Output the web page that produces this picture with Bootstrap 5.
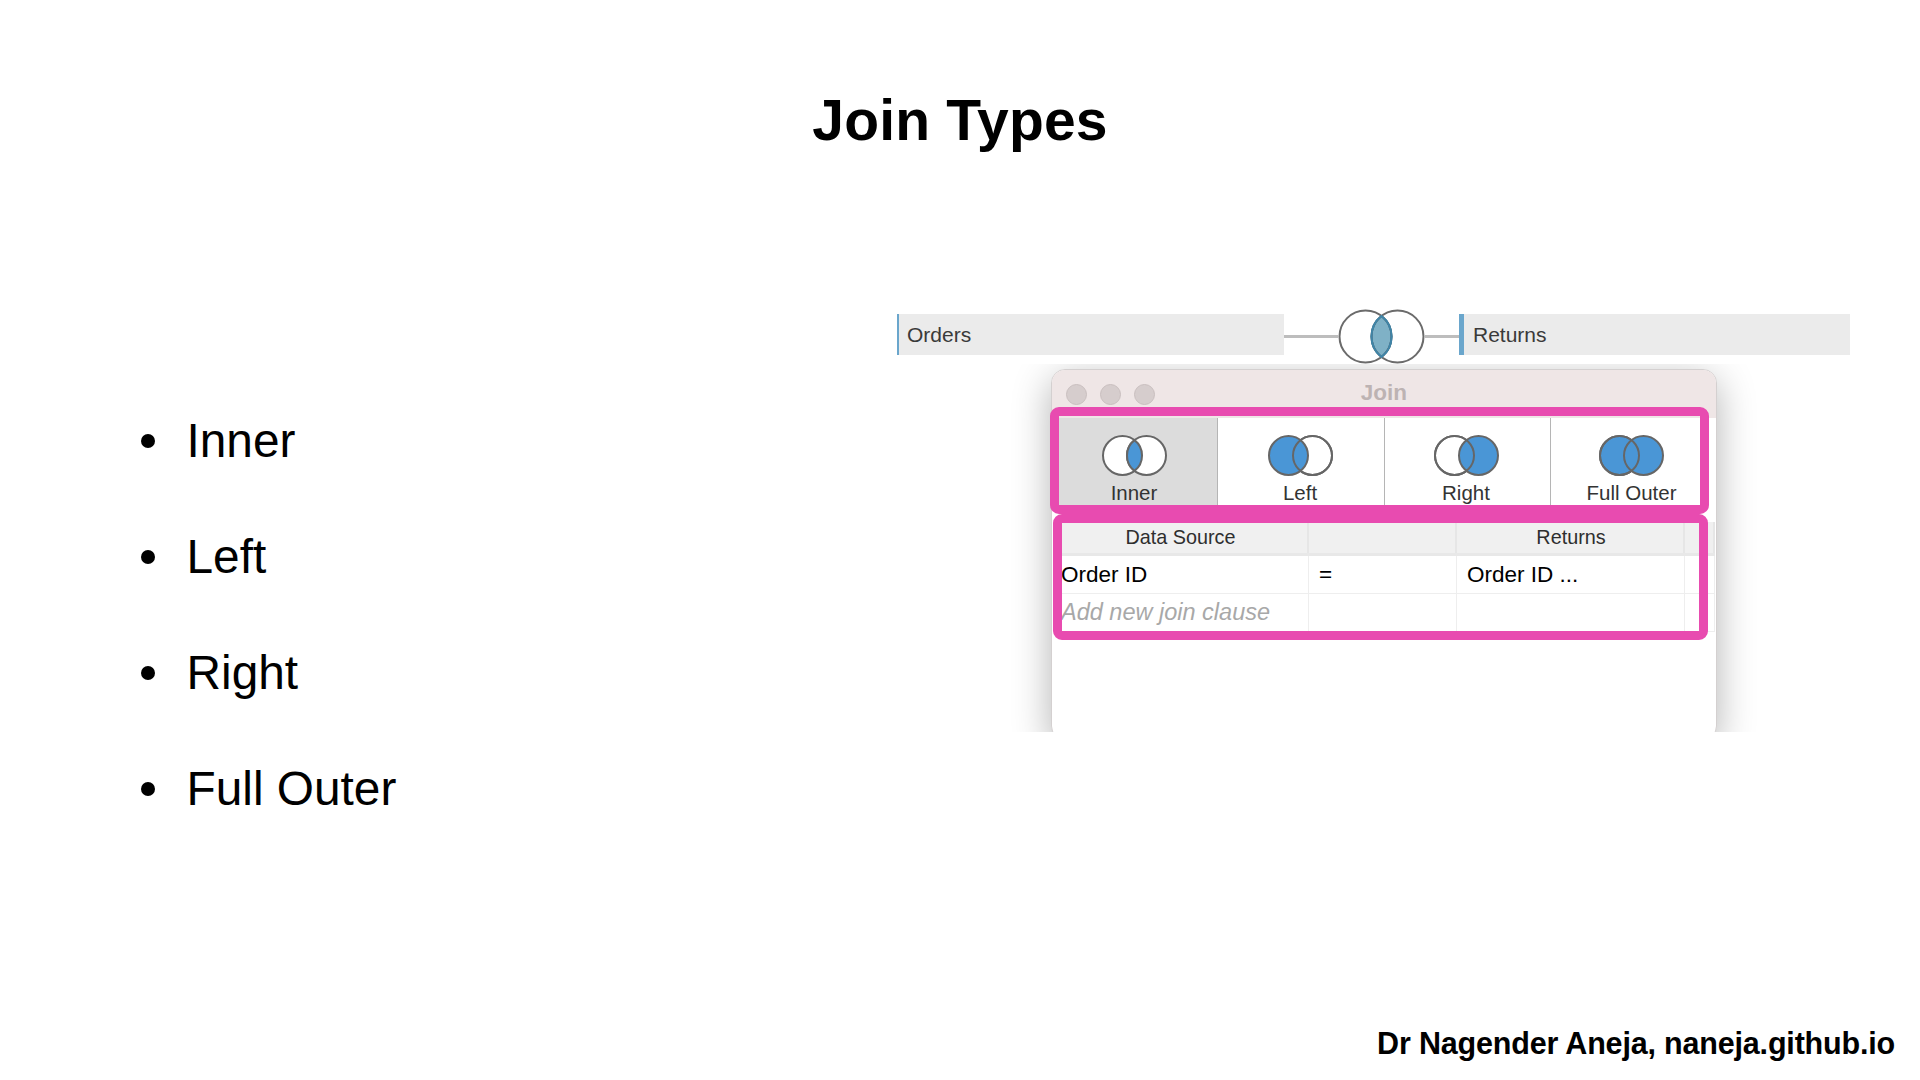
<!DOCTYPE html>
<html lang="en">
<head>
<meta charset="utf-8">
<title>Join Types</title>
<link rel="stylesheet" href="https://cdn.jsdelivr.net/npm/bootstrap@5.3.0/dist/css/bootstrap.min.css">
<style>
html,body{margin:0;background:#fff;}
body{font-family:"Liberation Sans",Arial,sans-serif;color:#000;}
.slide{width:1920px;height:1080px;overflow:hidden;}
.slide-head{height:309px;padding-top:82px;}
.slide-title{font-size:57px;font-weight:700;line-height:76px;margin:0;text-align:center;letter-spacing:.2px;}
.bullets{width:897px;padding:74px 0 0 141px;margin:0;list-style:none;}
.bullets li{height:116px;font-size:47.8px;gap:31.5px;}
.bullets li::before{content:"";width:14px;height:14px;border-radius:50%;background:#000;flex:none;}
.fig{width:960px;}
.src-bar{height:41px;margin-top:5px;background:#ebebeb;color:#3a3a3a;font-size:21px;line-height:41px;}
.src-left{width:387px;border-left:2px solid #6aa6cc;padding-left:8px;}
.src-right{width:391px;border-left:5px solid #6aa6cc;padding-left:9px;}
.connector{height:3px;margin-top:26px;background:#bdbdbd;}
.conn-a{width:54px;}
.conn-b{width:34px;}
.venn-top{flex:none;display:block;width:87px;height:55px;}
.clip-area{width:780px;height:368px;margin-left:100px;padding:5px 0 0 54px;overflow:hidden;}
.win{position:relative;width:666px;height:371px;border:1px solid #d4d0d0;border-radius:14px;background:#fff;box-shadow:0 10px 38px rgba(0,0,0,.3);}
.win-bar{height:48px;background:#efe6e6;border-radius:13px 13px 0 0;padding-left:14px;gap:13px;}
.dot{width:21px;height:21px;border-radius:50%;background:#d6cdcd;border:1px solid #c9bfbf;}
.win-title{position:absolute;left:0;right:0;top:5px;text-align:center;font-size:22.5px;font-weight:700;color:#bdb3b3;line-height:36px;}
.tabs{height:87px;padding-left:7px;}
.tab{color:#333;font-size:20.5px;line-height:24px;padding-top:17px;border-right:1px solid #b5b5b5;}
.tab svg{display:block;width:65px;height:41px;margin-bottom:5px;}
.tab-inner{width:159px;background:#dcdcdc;padding-right:8px;}
.tab-left{width:167px;padding-right:2px;}
.tab-right{width:166px;padding-right:3px;}
.tab-full{width:151px;border-right:0;padding-left:10px;}
.grid-wrap{margin:17px 0 0 7px;width:656px;}
.grid-row{display:grid;grid-template-columns:250px 148px 228px 30px;}
.grid-head{height:34px;background:#f0f0f0;border-bottom:3px solid #e8e8e8;color:#2e2e2e;font-size:19.8px;line-height:31px;text-align:center;}
.grid-head > div{border-right:2px solid #e6e6e6;}
.grid-head > div:first-child{padding-right:5px;}
.grid-head > div:nth-child(3){padding-left:2px;}
.grid-body{height:38px;border-bottom:1px solid #eee;font-size:22.5px;line-height:38px;}
.grid-body > div{border-right:1px solid #eee;padding-left:10px;white-space:nowrap;}
.grid-body > div:first-child{padding-left:2px;}
.grid-empty{color:#a8a8a8;font-style:italic;font-size:23.5px;line-height:36px;}
.pink{position:absolute;border:9px solid #e84bb0;border-radius:9px;pointer-events:none;}
.pink-a{left:-2px;top:37px;width:659px;height:107px;}
.pink-b{left:1px;top:144px;width:655px;height:126px;}
.credit{font-size:30.5px;font-weight:700;line-height:40px;padding:0 25px 17px 0;text-align:right;letter-spacing:-.18px;}
</style>
</head>
<body>
<div class="slide d-flex flex-column">
  <div class="slide-head"><h1 class="slide-title">Join Types</h1></div>
  <div class="d-flex">
    <ul class="bullets">
      <li class="d-flex align-items-center">Inner</li>
      <li class="d-flex align-items-center">Left</li>
      <li class="d-flex align-items-center">Right</li>
      <li class="d-flex align-items-center">Full Outer</li>
    </ul>
    <div class="fig">
      <div class="d-flex align-items-start">
        <div class="src-bar src-left">Orders</div>
        <div class="connector conn-a"></div>
        <svg class="venn-top" viewBox="0 0 87 55">
          <path d="M43.5 7A26 26 0 0 1 43.5 48A26 26 0 0 1 43.5 7Z" fill="#7fb1c6" stroke="#3f85a8" stroke-width="2"/>
          <circle cx="27.5" cy="27.5" r="26" fill="none" stroke="#6b6b6b" stroke-width="2"/>
          <circle cx="59.5" cy="27.5" r="26" fill="none" stroke="#6b6b6b" stroke-width="2"/>
          <path d="M43.5 7A26 26 0 0 1 43.5 48A26 26 0 0 1 43.5 7Z" fill="none" stroke="#3f85a8" stroke-width="2"/>
        </svg>
        <div class="connector conn-b"></div>
        <div class="src-bar src-right">Returns</div>
      </div>
      <div class="clip-area">
        <div class="win">
          <div class="win-bar d-flex align-items-center">
            <span class="dot"></span><span class="dot"></span><span class="dot"></span>
          </div>
          <div class="win-title">Join</div>
          <div class="tabs d-flex">
            <div class="tab tab-inner d-flex flex-column align-items-center">
              <svg viewBox="0 0 65 41">
                <circle cx="20.5" cy="20.5" r="19.5" fill="#fff" stroke="#666" stroke-width="2"/>
                <circle cx="44.5" cy="20.5" r="19.5" fill="#fff" stroke="#666" stroke-width="2"/>
                <path d="M32.5 5.1A19.5 19.5 0 0 1 32.5 35.9A19.5 19.5 0 0 1 32.5 5.1Z" fill="#4a96d6" stroke="#666" stroke-width="2"/>
              </svg>
              Inner
            </div>
            <div class="tab tab-left d-flex flex-column align-items-center">
              <svg viewBox="0 0 65 41">
                <circle cx="44.5" cy="20.5" r="19.5" fill="#fff" stroke="#666" stroke-width="2"/>
                <circle cx="20.5" cy="20.5" r="19.5" fill="#4a96d6" stroke="#666" stroke-width="2"/>
                <circle cx="44.5" cy="20.5" r="19.5" fill="none" stroke="#666" stroke-width="2"/>
              </svg>
              Left
            </div>
            <div class="tab tab-right d-flex flex-column align-items-center">
              <svg viewBox="0 0 65 41">
                <circle cx="20.5" cy="20.5" r="19.5" fill="#fff" stroke="#666" stroke-width="2"/>
                <circle cx="44.5" cy="20.5" r="19.5" fill="#4a96d6" stroke="#666" stroke-width="2"/>
                <circle cx="20.5" cy="20.5" r="19.5" fill="none" stroke="#666" stroke-width="2"/>
              </svg>
              Right
            </div>
            <div class="tab tab-full d-flex flex-column align-items-center">
              <svg viewBox="0 0 65 41">
                <circle cx="20.5" cy="20.5" r="19.5" fill="#4a96d6" stroke="#666" stroke-width="2"/>
                <circle cx="44.5" cy="20.5" r="19.5" fill="#4a96d6" stroke="#666" stroke-width="2"/>
                <circle cx="20.5" cy="20.5" r="19.5" fill="none" stroke="#666" stroke-width="2"/>
              </svg>
              Full Outer
            </div>
          </div>
          <div class="grid-wrap">
            <div class="grid-row grid-head"><div>Data Source</div><div></div><div>Returns</div><div></div></div>
            <div class="grid-row grid-body"><div>Order ID</div><div>=</div><div>Order ID ...</div><div></div></div>
            <div class="grid-row grid-body"><div class="grid-empty">Add new join clause</div><div></div><div></div><div></div></div>
          </div>
          <div class="pink pink-a"></div>
          <div class="pink pink-b"></div>
        </div>
      </div>
    </div>
  </div>
  <div class="credit mt-auto">Dr Nagender Aneja, naneja.github.io</div>
</div>
<script src="https://cdn.jsdelivr.net/npm/bootstrap@5.3.0/dist/js/bootstrap.bundle.min.js"></script>
</body>
</html>
